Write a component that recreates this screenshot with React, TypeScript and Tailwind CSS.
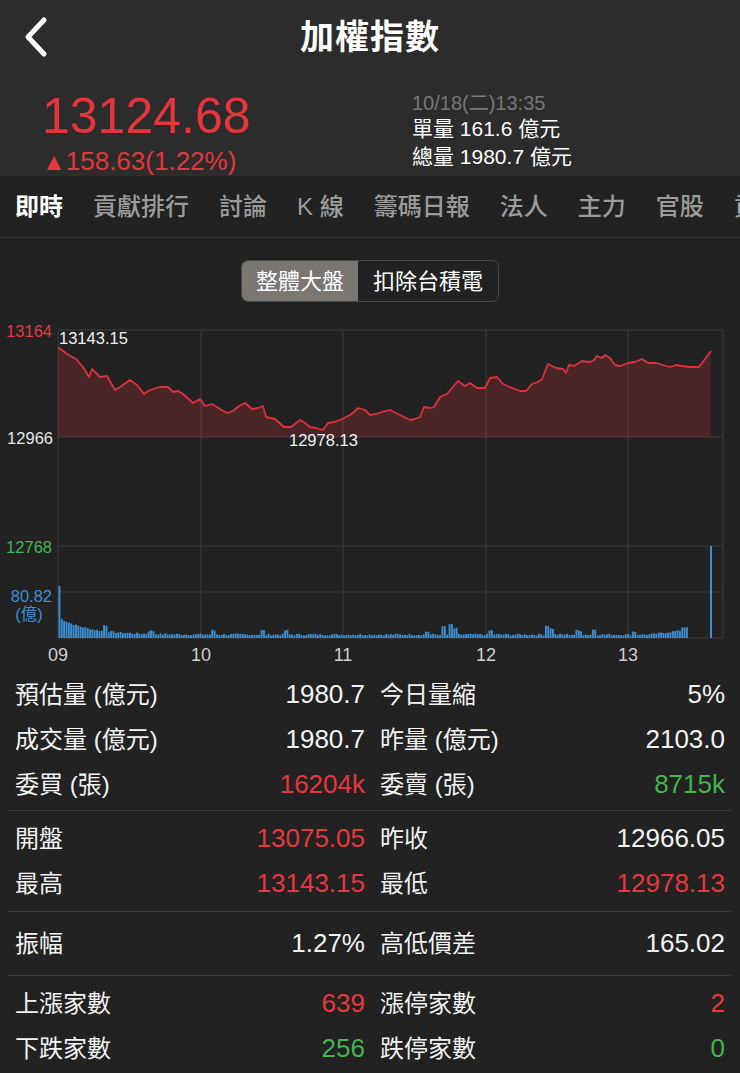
import React from 'react';

const RED = '#e5363c';
const GREEN = '#41b54b';
const BLUE = '#3a8fd4';

// price line traced from the intraday chart (page coords)
const pricePts: [number, number][] = [
  [58, 348], [67, 355], [76, 360], [83, 368], [89, 378], [92, 370], [100, 378], [107, 377],
  [115, 391], [120, 388], [130, 381], [137, 386], [144, 395], [150, 391], [160, 388], [168, 388],
  [173, 393], [178, 392], [183, 395], [193, 404], [200, 400], [205, 407], [212, 405], [220, 410],
  [227, 414], [233, 412], [239, 407], [245, 404], [252, 410], [258, 409], [263, 407], [266, 418],
  [275, 420], [284, 428], [291, 428], [300, 421], [305, 424], [310, 428], [316, 429], [323, 431],
  [328, 424], [334, 423], [340, 421], [346, 418], [350, 416], [354, 413], [358, 409], [365, 411],
  [370, 416], [376, 415], [382, 413], [390, 411], [400, 416], [410, 421], [415, 420], [420, 418],
  [424, 408], [430, 409], [434, 408], [440, 398], [447, 395], [452, 389], [458, 382], [465, 387],
  [470, 384], [477, 389], [485, 389], [490, 379], [497, 378], [503, 385], [512, 389], [520, 392],
  [526, 392], [532, 385], [538, 383], [542, 380], [548, 365], [556, 369], [563, 370], [566, 374],
  [569, 366], [574, 367], [582, 362], [590, 363], [594, 361], [597, 357], [602, 359], [605, 356],
  [610, 359], [615, 366], [620, 367], [628, 364], [635, 363], [642, 360], [648, 364], [656, 364],
  [663, 366], [670, 368], [676, 366], [682, 367], [690, 368], [699, 368], [711, 352],
];

const pricePath = pricePts.map((p, i) => `${i ? 'L' : 'M'}${p[0]} ${p[1]}`).join(' ');
const fillPath = `${pricePath} L711 438 L58 438 Z`;

// volume bars
const bars: { x: number; h: number }[] = (() => {
  let seed = 7;
  const rnd = () => {
    seed = (seed * 9301 + 49297) % 233280;
    return seed / 233280;
  };
  const spikes: [number, number][] = [
    [104, 6], [150, 3], [212, 4], [262, 4], [285, 4], [426, 3], [443, 8], [449, 10], [454, 6],
    [490, 4], [547, 9], [551, 6], [578, 4], [593, 5], [633, 3],
  ];
  const out: { x: number; h: number }[] = [];
  for (let x = 58.5; x <= 687; x += 2.35) {
    let h = 2.6 + 16 * Math.exp(-(x - 60) / 28) + rnd() * 1.8;
    if (x < 60) h = 52;
    for (const [sx, sh] of spikes) if (Math.abs(x - sx) < 2.5) h += sh;
    if (x > 650) h += ((x - 650) / 37) * 5;
    if (x > 680) h += 3;
    out.push({ x, h });
  }
  return out;
})();

const Chart = () => {
  const grid = '#3c3c3c';
  const font = "'Liberation Sans','Noto Sans CJK TC',sans-serif";
  return (
    <svg width="740" height="360" viewBox="0 310 740 360" className="block">
      {/* grid */}
      {[331, 438, 547, 593, 639].map((y) => (
        <line key={y} x1="58" x2="723" y1={y} y2={y} stroke={grid} strokeWidth="1" />
      ))}
      {[58, 201, 343, 486, 628, 723].map((x) => (
        <line key={x} x1={x} x2={x} y1="331" y2="639" stroke={grid} strokeWidth="1" />
      ))}
      {/* price */}
      <path d={fillPath} fill="rgba(217,51,58,0.22)" />
      <path d={pricePath} fill="none" stroke="#dc3038" strokeWidth="1.8" strokeLinejoin="round" />
      {/* volume */}
      {bars.map((b, i) => (
        <rect key={i} x={b.x} y={639 - b.h} width="1.9" height={b.h} fill={BLUE} />
      ))}
      <rect x="710" y="547" width="2" height="92" fill={BLUE} />
      {/* axis labels */}
      <g fontFamily={font} fontSize="16.5">
        <text x="52" y="338" textAnchor="end" fill={RED}>13164</text>
        <text x="53" y="445" textAnchor="end" fill="#e6e6e6">12966</text>
        <text x="52" y="554" textAnchor="end" fill={GREEN}>12768</text>
        <text x="52" y="603" textAnchor="end" fill={BLUE}>80.82</text>
        <text x="29" y="621" textAnchor="middle" fill={BLUE}>(億)</text>
        <text x="59" y="345" fill="#f2f2f2">13143.15</text>
        <text x="289" y="447" fill="#f2f2f2">12978.13</text>
      </g>
      <g fontFamily={font} fontSize="18" fill="#cfcfcf" textAnchor="middle">
        <text x="58" y="662">09</text>
        <text x="201" y="662">10</text>
        <text x="343" y="662">11</text>
        <text x="486" y="662">12</text>
        <text x="628" y="662">13</text>
      </g>
    </svg>
  );
};

type Cell = [string, string, string?];

const Row = ({ left, right }: { left: Cell; right: Cell }) => (
  <div className="grid h-[45px] grid-cols-[350px_1fr] items-center gap-x-[15px] px-[15px] text-[24px]">
    <div className="flex items-center justify-between">
      <span className="text-[#f2f2f2]">{left[0]}</span>
      <span className="text-[26px]" style={{ color: left[2] ?? '#f2f2f2' }}>{left[1]}</span>
    </div>
    <div className="flex items-center justify-between">
      <span className="text-[#f2f2f2]">{right[0]}</span>
      <span className="text-[26px]" style={{ color: right[2] ?? '#f2f2f2' }}>{right[1]}</span>
    </div>
  </div>
);

const sections: [Cell, Cell][][] = [
  [
    [['預估量 (億元)', '1980.7'], ['今日量縮', '5%']],
    [['成交量 (億元)', '1980.7'], ['昨量 (億元)', '2103.0']],
    [['委買 (張)', '16204k', RED], ['委賣 (張)', '8715k', GREEN]],
  ],
  [
    [['開盤', '13075.05', RED], ['昨收', '12966.05']],
    [['最高', '13143.15', RED], ['最低', '12978.13', RED]],
  ],
  [[['振幅', '1.27%'], ['高低價差', '165.02']]],
  [
    [['上漲家數', '639', RED], ['漲停家數', '2', RED]],
    [['下跌家數', '256', GREEN], ['跌停家數', '0', GREEN]],
  ],
];

const sectionPad = ['py-[3px]', 'py-[5px]', 'py-[9px]', 'py-[5px]'];

const tabs = ['即時', '貢獻排行', '討論', 'K 線', '籌碼日報', '法人', '主力', '官股', '貢獻'];

export default function App() {
  return (
    <div className="min-h-[1073px] w-[740px] overflow-hidden bg-[#222222] font-['Liberation_Sans','Noto_Sans_CJK_TC',sans-serif] text-white">
      {/* header */}
      <div className="h-[176px] bg-[#2c2c2c]">
        <div className="relative flex h-[75px] items-center justify-center">
          <svg className="absolute left-[20px] top-[16px]" width="32" height="42" viewBox="0 0 32 42">
            <polyline points="24,4 8,21 24,38" fill="none" stroke="#fff" strokeWidth="5" strokeLinecap="round" strokeLinejoin="round" />
          </svg>
          <h1 className="text-[34px] font-semibold tracking-[1px]">加權指數</h1>
        </div>
        <div className="flex px-[42px] pt-[13px]">
          <div className="w-[370px]">
            <div className="text-[50px] leading-[56px]" style={{ color: RED }}>13124.68</div>
            <div className="mt-[2px] text-[26px] leading-[30px]" style={{ color: RED }}>
              <span className="text-[24px]">▲</span>158.63(1.22%)
            </div>
          </div>
          <div className="pt-[3px] text-[21px] leading-[28px]">
            <div className="text-[20px] leading-[24px] text-[#777777]">10/18(二)13:35</div>
            <div>單量 161.6 億元</div>
            <div>總量 1980.7 億元</div>
          </div>
        </div>
      </div>

      {/* tabs */}
      <div className="flex h-[62px] items-center gap-[30px] overflow-hidden whitespace-nowrap border-b border-[#383838] px-[15px] text-[24px]">
        {tabs.map((t, i) => (
          <span key={t} className={i === 0 ? 'font-bold text-white' : 'font-medium text-[#9b9b9b]'}>
            {t}
          </span>
        ))}
      </div>

      {/* segmented control */}
      <div className="mt-[22px] flex justify-center">
        <div className="flex h-[42px] overflow-hidden rounded-[7px] border border-[#474747] text-[22px]">
          <div className="flex items-center bg-[#7a7672] px-[14px] text-white">整體大盤</div>
          <div className="flex items-center px-[15px] text-white">扣除台積電</div>
        </div>
      </div>

      <div className="mt-[7px]">
        <Chart />
      </div>

      {/* stats */}
      <div className="pb-[4px]">
        {sections.map((rows, si) => (
          <div key={si} className={`mx-2 ${si ? 'border-t border-[#3a3a3a]' : ''} ${sectionPad[si]}`}>
            <div className="-mx-2">
              {rows.map((r, ri) => (
                <Row key={ri} left={r[0]} right={r[1]} />
              ))}
            </div>
          </div>
        ))}
      </div>
    </div>
  );
}
